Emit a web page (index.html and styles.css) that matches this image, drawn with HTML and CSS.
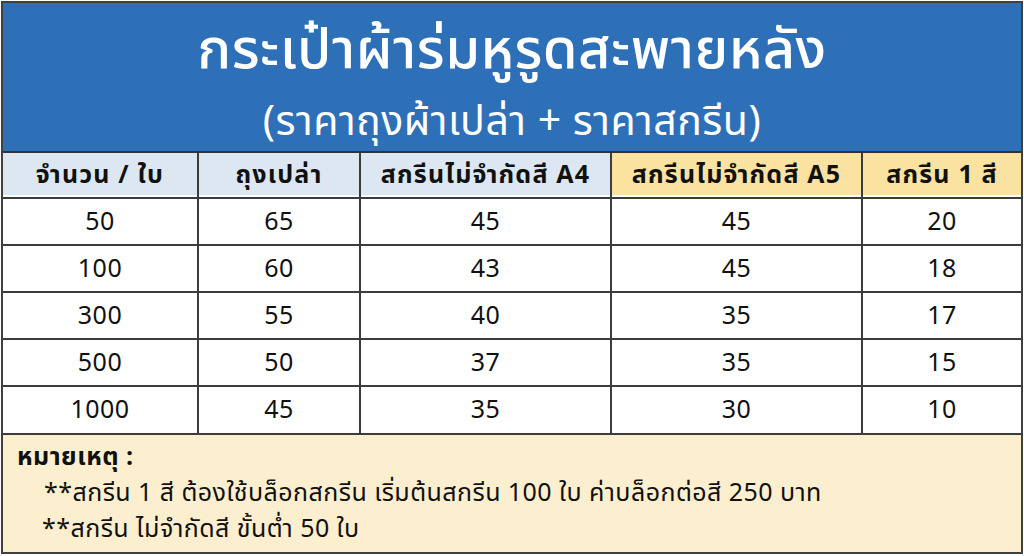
FILE: index.html
```html
<!DOCTYPE html>
<html lang="th">
<head>
<meta charset="utf-8">
<title>กระเป๋าผ้าร่มหูรูดสะพายหลัง</title>
<link rel="stylesheet" href="styles.css">
</head>
<body>
<div class="sheet">
  <header class="banner">
    <h1 class="title">กระเป๋าผ้าร่มหูรูดสะพายหลัง</h1>
    <p class="subtitle">(ราคาถุงผ้าเปล่า + ราคาสกรีน)</p>
  </header>
  <table class="prices">
    <colgroup>
      <col class="c1"><col class="c2"><col class="c3"><col class="c4"><col class="c5">
    </colgroup>
    <thead>
      <tr>
        <th class="blue">จำนวน / ใบ</th>
        <th class="blue">ถุงเปล่า</th>
        <th class="blue">สกรีนไม่จำกัดสี A4</th>
        <th class="yellow">สกรีนไม่จำกัดสี A5</th>
        <th class="yellow">สกรีน 1 สี</th>
      </tr>
    </thead>
    <tbody>
      <tr><td>50</td><td>65</td><td>45</td><td>45</td><td>20</td></tr>
      <tr><td>100</td><td>60</td><td>43</td><td>45</td><td>18</td></tr>
      <tr><td>300</td><td>55</td><td>40</td><td>35</td><td>17</td></tr>
      <tr><td>500</td><td>50</td><td>37</td><td>35</td><td>15</td></tr>
      <tr><td>1000</td><td>45</td><td>35</td><td>30</td><td>10</td></tr>
    </tbody>
  </table>
  <div class="note">
    <p class="note-head">หมายเหตุ :</p>
    <p class="note-line first">**สกรีน 1 สี ต้องใช้บล็อกสกรีน เริ่มต้นสกรีน 100 ใบ ค่าบล็อกต่อสี 250 บาท</p>
    <p class="note-line second">**สกรีน ไม่จำกัดสี ขั้นต่ำ 50 ใบ</p>
  </div>
</div>
</body>
</html>
```

FILE: styles.css
```css
* { box-sizing: border-box; }
html, body { margin: 0; padding: 0; background: #ffffff; }
body {
  font-family: "Noto Sans Thai", "Noto Sans Thai Looped", "Noto Sans", "DejaVu Sans", sans-serif;
  color: #111;
}
.sheet {
  margin: 1px 0 0 1px;
  width: 1022px;
  height: 553px;
  border: 2px solid #404040;
  display: flex;
  flex-direction: column;
}
.banner {
  background: #2e70b8;
  color: #fff;
  height: 150px;
  border-bottom: 2px solid #333;
  display: flex;
  flex-direction: column;
  align-items: center;
}
.title {
  margin: 16px 0 0;
  font-size: 56px;
  font-weight: 500;
  line-height: 64px;
  letter-spacing: 0.5px;
}
.subtitle {
  margin: 15px 0 0;
  font-size: 41px;
  font-weight: 400;
  line-height: 48px;
  letter-spacing: 0.5px;
}
.prices {
  width: 100%;
  border-collapse: collapse;
  border-style: hidden;
  table-layout: fixed;
}
.c1 { width: 195px; }
.c2 { width: 162px; }
.c3 { width: 251px; }
.c4 { width: 251px; }
.c5 { width: auto; }
.prices th, .prices td {
  border: 2px solid #3c3c3c;
  text-align: center;
  padding: 0;
}
.prices th {
  height: 45px;
  font-size: 25px;
  font-weight: 700;
  letter-spacing: 1.2px;
  box-shadow: inset 0 -2px 0 #fff;
}
.prices td {
  height: 47px;
  font-size: 25px;
  font-weight: 400;
  letter-spacing: 0.5px;
}
.prices th.blue { background: #dde7f2; }
.prices th.yellow { background: #fae3a0; }
.note {
  flex: 1;
  background: #fcefcf;
  border-top: 2px solid #3c3c3c;
  padding: 4px 0 0 14px;
}
.note p { margin: 0; font-size: 25px; line-height: 36px; }
.note-head { font-weight: 700; letter-spacing: 0.5px; }
.note-line { letter-spacing: 0.45px; }
.note-line.first { padding-left: 27px; }
.note-line.second { padding-left: 25px; }
```
